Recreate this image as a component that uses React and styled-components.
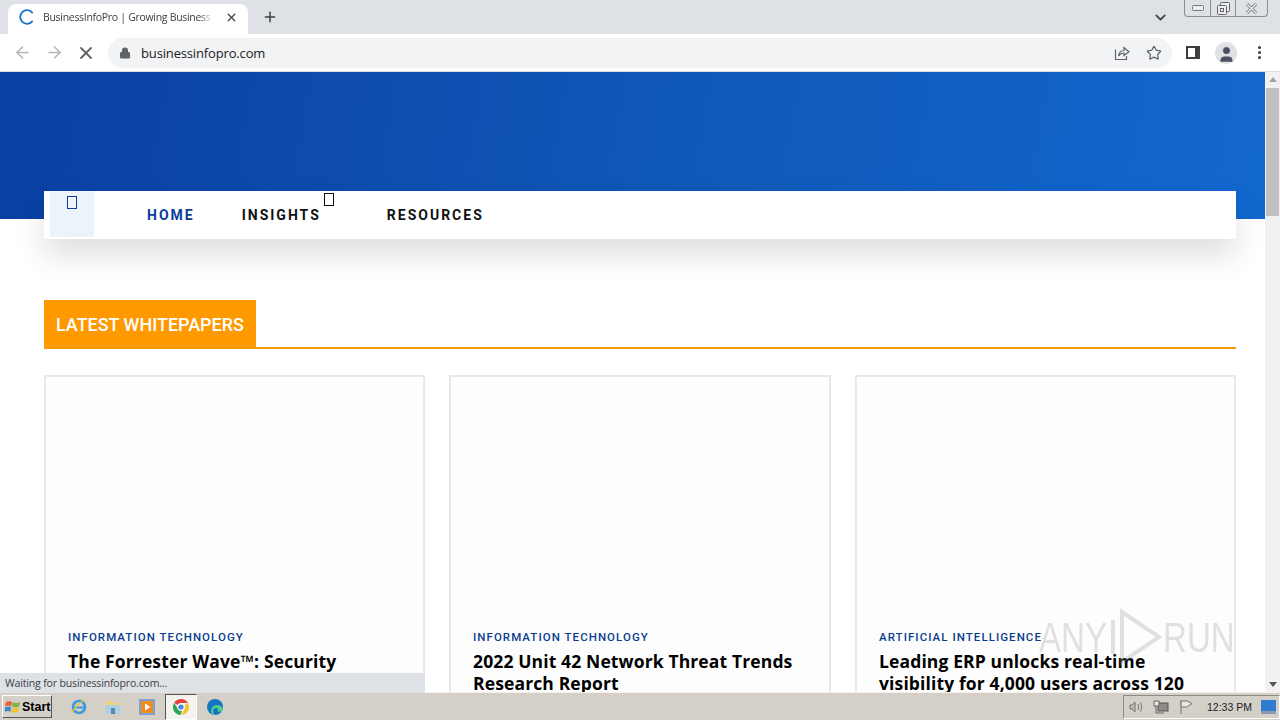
import styled, { createGlobalStyle } from "styled-components";
import { ArrowLeft, ArrowRight, X, Plus, Lock, Star, ChevronDown, MoreVertical, User } from "lucide-react";

const Global = createGlobalStyle`
  html, body { margin: 0; padding: 0; height: 100%; overflow: hidden; }
  * { box-sizing: border-box; }
  body { font-family: "Open Sans", "Liberation Sans", sans-serif; background: #fff; }
`;

const Screen = styled.div`
  position: relative;
  width: 1280px;
  height: 720px;
  display: flex;
  flex-direction: column;
  overflow: hidden;
`;

const TabStrip = styled.div`
  height: 34px;
  flex: none;
  background: #dee1e6;
  display: flex;
  align-items: flex-end;
  padding-left: 8px;
`;

const Tab = styled.div`
  width: 240px;
  height: 30px;
  background: #fff;
  border-radius: 8px 8px 0 0;
  display: flex;
  align-items: center;
  padding: 0 0 4px 11px;
  color: #3c4043;
  font-size: 10.5px;
`;

const TabTitle = styled.span`
  width: 170px;
  margin-left: 8px;
  white-space: nowrap;
  overflow: hidden;
  letter-spacing: -0.3px;
  -webkit-mask-image: linear-gradient(to right, #000 92%, transparent);
  mask-image: linear-gradient(to right, #000 92%, transparent);
`;

const TabClose = styled.span`
  display: flex;
  margin-left: 12px;
  color: #3c4043;
`;

const NewTab = styled.span`
  display: flex;
  margin: 0 0 9px 14px;
  color: #3c4043;
`;

const StripRight = styled.div`
  margin-left: auto;
  align-self: stretch;
  display: flex;
  align-items: flex-start;
`;

const TabsMenu = styled.span`
  display: flex;
  margin: 9px 15px 0 0;
  color: #3c4043;
`;

const WindowButtons = styled.div`
  width: 84px;
  height: 17px;
  margin-right: 12px;
  border: 1px solid #8a8c90;
  border-top: none;
  border-radius: 0 0 4px 4px;
  display: grid;
  grid-template-columns: 25px 25px 1fr;
`;

const WindowButton = styled.span`
  display: flex;
  align-items: center;
  justify-content: center;
  border-left: ${(p) => (p.$first ? "none" : "1px solid #8a8c90")};
`;

const Toolbar = styled.div`
  height: 38px;
  flex: none;
  background: #fff;
  border-bottom: 1px solid #dadce0;
  display: flex;
  align-items: center;
  padding-left: 12px;
`;

const NavIcon = styled.span`
  width: 20px;
  display: flex;
  justify-content: center;
  margin-left: ${(p) => p.$left || 0}px;
  margin-right: ${(p) => p.$gap || 0}px;
  color: ${(p) => p.$color || "#5f6368"};
`;

const Omnibox = styled.div`
  width: 1064px;
  height: 30px;
  margin-left: 12px;
  border-radius: 15px;
  background: #f1f3f4;
  display: flex;
  align-items: center;
  padding-left: 11px;
  color: #202124;
  font-size: 13px;
  letter-spacing: -0.15px;
`;

const Url = styled.span`
  margin-left: 10px;
`;

const OmniIcons = styled.div`
  margin-left: auto;
  margin-right: 10px;
  display: flex;
  gap: 16px;
  color: #5f6368;
`;

const ToolRight = styled.div`
  display: flex;
  align-items: center;
  margin-left: 14px;
  color: #5f6368;
`;

const Avatar = styled.span`
  width: 22px;
  height: 22px;
  margin-left: 15px;
  border-radius: 50%;
  background: #dfe1e5;
  display: flex;
  align-items: flex-end;
  justify-content: center;
  overflow: hidden;
  color: #4a4f63;
`;

const Body = styled.div`
  flex: 1;
  min-height: 0;
  display: flex;
`;

const Page = styled.div`
  flex: 1;
  min-width: 0;
  overflow: hidden;
  background: #fff;
`;

const Hero = styled.div`
  height: 147px;
  background: linear-gradient(100deg, #0a3fa3 0%, #1059b8 55%, #1267cf 100%);
`;

const MainNav = styled.nav`
  height: 48px;
  margin: -28px 29px 0 44px;
  position: relative;
  background: #fff;
  display: flex;
  box-shadow: 0 16px 30px rgba(0, 0, 0, 0.13);
  font-family: Roboto, "Liberation Sans", sans-serif;
`;

const MenuToggle = styled.div`
  width: 44px;
  height: 46px;
  margin-left: 6px;
  background: #edf3fb;
  display: flex;
  justify-content: center;
  padding-top: 5px;
`;

const MissingGlyph = styled.span`
  width: ${(p) => p.$w}px;
  height: ${(p) => p.$h}px;
  border: 1px solid ${(p) => p.$color};
`;

const NavItem = styled.a`
  position: relative;
  margin-left: ${(p) => p.$left}px;
  line-height: 48px;
  font-size: 14px;
  font-weight: 700;
  letter-spacing: 2px;
  color: ${(p) => (p.$active ? "#0a3d9a" : "#111")};
`;

const CaretBox = styled.span`
  position: absolute;
  top: 2px;
  left: 82px;
  display: flex;
`;

const Section = styled.section`
  margin: 61px 29px 0 44px;
`;

const SectionHead = styled.div`
  height: 49px;
  border-bottom: 2px solid #f59c0b;
`;

const SectionTitle = styled.h2`
  width: 212px;
  height: 48px;
  margin: 0;
  padding-left: 12px;
  background: #ff9900;
  color: #fff;
  font: 500 18px/50px Roboto, "Liberation Sans", sans-serif;
  letter-spacing: -0.03px;
  white-space: nowrap;
`;

const Cards = styled.div`
  margin-top: 26px;
  display: grid;
  grid-template-columns: 381px 382px 381px;
  column-gap: 24px;
`;

const Card = styled.article`
  height: 340px;
  background: #fdfdfd;
  border: 2px solid #e8e8e8;
  padding: 253px 22px 0;
`;

const Category = styled.div`
  color: #0a3d8f;
  font: 500 11.5px/14px Roboto, "Liberation Sans", sans-serif;
  letter-spacing: 1.05px;
  text-transform: uppercase;
`;

const CardTitle = styled.h3`
  margin: 6px 0 0;
  color: #000;
  font: 700 17.5px/22px "Open Sans", "Liberation Sans", sans-serif;
  letter-spacing: 0.13px;
`;

const Scrollbar = styled.div`
  width: 15px;
  flex: none;
  background: #f1f1f1;
  display: flex;
  flex-direction: column;
  align-items: center;
  padding: 5px 0;
`;

const Thumb = styled.div`
  width: 13px;
  height: 128px;
  margin-top: 6px;
  background: #c1c1c1;
`;

const ArrowDown = styled.div`
  margin-top: auto;
  width: 0;
  height: 0;
  border: 4px solid transparent;
  border-top: 5px solid #555;
  border-bottom: none;
`;

const ArrowUp = styled(ArrowDown)`
  margin-top: 0;
  border-top: none;
  border-bottom: 5px solid #a3a3a3;
`;

const Taskbar = styled.div`
  height: 28px;
  flex: none;
  background: #d4d0c8;
  border-top: 1px solid #f3f1ec;
  display: flex;
  align-items: center;
  padding-left: 2px;
`;

const StartButton = styled.div`
  width: 50px;
  height: 23px;
  background: #d4d0c8;
  border: 1px solid;
  border-color: #fff #555 #555 #fff;
  display: flex;
  align-items: center;
  gap: 1px;
  padding-left: 2px;
  font: 700 12.5px "Liberation Sans", sans-serif;
  color: #000;
`;

const QuickLaunch = styled.div`
  margin-left: 11px;
  display: flex;
  align-items: center;
`;

const LaunchItem = styled.span`
  width: 32px;
  height: 26px;
  margin-right: 2px;
  display: flex;
  align-items: center;
  justify-content: center;
  ${(p) => p.$active && "background: #f4f3f0; border: 1px solid; border-color: #555 #fff #fff #555;"}
`;

const Tray = styled.div`
  margin-left: auto;
  width: 157px;
  height: 24px;
  border: 1px solid;
  border-color: #8d8a84 #fff #fff #8d8a84;
  display: flex;
  align-items: center;
  gap: 9px;
  padding-left: 4px;
  font: 10.5px "Liberation Sans", sans-serif;
  color: #222;
`;

const Clock = styled.span`
  margin-left: 4px;
  white-space: nowrap;
`;

const StatusBubble = styled.div`
  position: absolute;
  left: 0;
  bottom: 27px;
  width: 425px;
  height: 20px;
  padding-left: 5px;
  background: #dee1e6;
  border-top-right-radius: 2px;
  color: #3c4043;
  font-size: 10.5px;
  line-height: 20px;
  letter-spacing: -0.15px;
`;

const Watermark = styled.div`
  position: absolute;
  left: 1039px;
  top: 608px;
  display: flex;
  align-items: center;
  color: rgba(150, 150, 150, 0.28);
  font: 400 43px/54px "Liberation Sans", sans-serif;
  pointer-events: none;
`;

const Narrow = styled.span`
  display: inline-block;
  width: ${(p) => p.$w}px;
  transform: scaleX(0.77);
  transform-origin: left;
  white-space: nowrap;
`;

function Spinner() {
  return (
    <svg width="16" height="16" viewBox="0 0 16 16" fill="none">
      <path d="M13.2 3.6A6.8 6.8 0 1 0 13.2 12.4" stroke="#1a6fc9" strokeWidth="1.8" strokeLinecap="round" />
    </svg>
  );
}

function ShareIcon() {
  return (
    <svg width="16" height="16" viewBox="0 0 16 16" fill="none" stroke="#5f6368" strokeWidth="1.2">
      <path d="M1.5 4.5V14.5H12.5V11" />
      <path d="M4.5 11C5 7.5 7.5 5.5 10 5.5V2.5L15 6.8 10 10.5V8C8 8 6 9 4.5 11Z" />
    </svg>
  );
}

function SidePanelIcon() {
  return (
    <svg width="14" height="14" viewBox="0 0 14 14">
      <rect x="0" y="0" width="14" height="13" fill="#3c4043" />
      <rect x="2" y="2" width="7" height="9" fill="#fff" />
    </svg>
  );
}

function WinLogo() {
  return (
    <svg width="16" height="15" viewBox="0 0 18 16">
      <path d="M1 3Q4 1 8 3L7 8Q4 6 0 8Z" fill="#e8622c" />
      <path d="M9 3Q12 5 17 3L16 8Q12 10 8 8Z" fill="#7cb342" />
      <path d="M0 9Q4 7 7 9L6 14Q3 12 0 14Z" fill="#3d87d6" />
      <path d="M8 9Q12 11 16 9L15 14Q11 16 7 14Z" fill="#f5c02c" />
    </svg>
  );
}

function IeIcon() {
  return (
    <svg width="18" height="18" viewBox="0 0 18 18" fill="none">
      <circle cx="9" cy="9" r="6" stroke="#3a9bdc" strokeWidth="2.6" />
      <path d="M3 9.5H15" stroke="#3a9bdc" strokeWidth="2" />
      <path d="M2 15C4 10 10 3 16 2" stroke="#f2c230" strokeWidth="1.2" />
    </svg>
  );
}

function FolderIcon() {
  return (
    <svg width="18" height="18" viewBox="0 0 18 18">
      <path d="M2 3H8L9 5H16V15H2Z" fill="#f0d278" />
      <rect x="2" y="7" width="14" height="9" fill="#a9d0e6" />
      <rect x="7" y="10" width="4" height="6" fill="#5a88a8" />
    </svg>
  );
}

function PlayerIcon() {
  return (
    <svg width="18" height="18" viewBox="0 0 18 18">
      <rect x="1" y="1" width="16" height="16" fill="#7aa4cf" />
      <rect x="3" y="3" width="12" height="12" fill="#f08c1e" />
      <path d="M7 5.5L12.5 9 7 12.5Z" fill="#fff" />
    </svg>
  );
}

function ChromeIcon() {
  return (
    <svg width="18" height="18" viewBox="0 0 18 18">
      <path d="M9 1A8 8 0 0 1 16 5H9A4 4 0 0 0 5.5 7L2.2 4.7A8 8 0 0 1 9 1Z" fill="#e0443a" />
      <path d="M16 5A8 8 0 0 1 9.5 17L12.5 11A4 4 0 0 0 12.5 7Z" fill="#f7c52b" />
      <path d="M2.2 4.7L5.5 10.5A4 4 0 0 0 10 13L8.5 17A8 8 0 0 1 2.2 4.7Z" fill="#2fa44f" />
      <circle cx="9" cy="9" r="3.4" fill="#fff" />
      <circle cx="9" cy="9" r="2.6" fill="#4a86e8" />
    </svg>
  );
}

function EdgeIcon() {
  return (
    <svg width="18" height="18" viewBox="0 0 18 18">
      <circle cx="9" cy="9" r="8" fill="#1573c4" />
      <path d="M7 17C3 13 6 7 11 7C15 7 17 10 17 11C16 14 13 14 11 13C13 12 12 10 10 10C7 10 6 14 9 17Z" fill="#4fd08a" />
    </svg>
  );
}

function SpeakerIcon() {
  return (
    <svg width="16" height="16" viewBox="0 0 16 16" fill="none" stroke="#77776f">
      <path d="M2 6H4L7 3V13L4 10H2Z" fill="#bdbab2" />
      <path d="M10 5Q11.5 8 10 11M12.5 3.5Q15 8 12.5 12.5" />
    </svg>
  );
}

function NetworkIcon() {
  return (
    <svg width="16" height="16" viewBox="0 0 16 16" fill="none">
      <rect x="5" y="4" width="10" height="8" fill="#8d8c86" stroke="#555" />
      <path d="M1 2H6V7H1Z" fill="#e8e6df" stroke="#66645e" />
      <path d="M3 7V14H11" stroke="#66645e" />
    </svg>
  );
}

function FlagIcon() {
  return (
    <svg width="16" height="16" viewBox="0 0 16 16" fill="none" stroke="#77776f">
      <path d="M3 1V15" />
      <path d="M3 2H9L14 4.5 9 8H3Z" fill="#e9e6dd" />
    </svg>
  );
}

function DesktopIcon() {
  return (
    <svg width="15" height="14" viewBox="0 0 15 14">
      <rect width="15" height="11" fill="#2f7bd0" />
      <rect y="11" width="15" height="3" fill="#8a9bb0" />
    </svg>
  );
}

const cards = [
  { category: "Information Technology", title: "The Forrester Wave™: Security" },
  { category: "Information Technology", title: "2022 Unit 42 Network Threat Trends Research Report" },
  { category: "Artificial Intelligence", title: "Leading ERP unlocks real-time visibility for 4,000 users across 120" },
];

export default function App() {
  return (
    <Screen>
      <Global />
      <TabStrip>
        <Tab>
          <Spinner />
          <TabTitle>BusinessInfoPro | Growing Business</TabTitle>
          <TabClose>
            <X size={13} strokeWidth={2.4} />
          </TabClose>
        </Tab>
        <NewTab>
          <Plus size={16} strokeWidth={2.2} />
        </NewTab>
        <StripRight>
          <TabsMenu>
            <ChevronDown size={17} strokeWidth={2.4} />
          </TabsMenu>
          <WindowButtons>
            <WindowButton $first>
              <svg width="12" height="6" viewBox="0 0 12 6" fill="#eceef1" stroke="#777">
                <rect x="0.5" y="0.5" width="11" height="5" rx="1" />
              </svg>
            </WindowButton>
            <WindowButton>
              <svg width="13" height="13" viewBox="0 0 13 13" fill="#eceef1" stroke="#666">
                <rect x="3.5" y="0.5" width="9" height="9" rx="1" />
                <rect x="0.5" y="3.5" width="9" height="9" rx="1" />
                <rect x="3.5" y="6.5" width="3" height="3" />
              </svg>
            </WindowButton>
            <WindowButton>
              <svg width="13" height="11" viewBox="0 0 13 11" fill="none">
                <path d="M2 1L11 10M11 1L2 10" stroke="#777" strokeWidth="3" />
                <path d="M2 1L11 10M11 1L2 10" stroke="#f1f2f4" strokeWidth="1.2" />
              </svg>
            </WindowButton>
          </WindowButtons>
        </StripRight>
      </TabStrip>
      <Toolbar>
        <NavIcon $color="#b4b6b9" $gap={12}>
          <ArrowLeft size={19} strokeWidth={2} />
        </NavIcon>
        <NavIcon $color="#b4b6b9" $gap={12}>
          <ArrowRight size={19} strokeWidth={2} />
        </NavIcon>
        <NavIcon>
          <X size={20} strokeWidth={2.2} />
        </NavIcon>
        <Omnibox>
          <Lock size={12} fill="#5f6368" color="#5f6368" strokeWidth={2.2} />
          <Url>businessinfopro.com</Url>
          <OmniIcons>
            <ShareIcon />
            <Star size={16} strokeWidth={1.8} />
          </OmniIcons>
        </Omnibox>
        <ToolRight>
          <SidePanelIcon />
          <Avatar>
            <User size={19} fill="#4a4f63" strokeWidth={1} />
          </Avatar>
          <NavIcon $left={12} $color="#3c4043">
            <MoreVertical size={17} strokeWidth={2.4} />
          </NavIcon>
        </ToolRight>
      </Toolbar>
      <Body>
        <Page>
          <Hero />
          <MainNav>
            <MenuToggle>
              <MissingGlyph $w={10} $h={13} $color="#0a3d9a" />
            </MenuToggle>
            <NavItem $left={53} $active>
              HOME
            </NavItem>
            <NavItem $left={47}>
              INSIGHTS
              <CaretBox>
                <MissingGlyph $w={10} $h={13} $color="#111" />
              </CaretBox>
            </NavItem>
            <NavItem $left={66}>RESOURCES</NavItem>
          </MainNav>
          <Section>
            <SectionHead>
              <SectionTitle>LATEST WHITEPAPERS</SectionTitle>
            </SectionHead>
            <Cards>
              {cards.map((card) => (
                <Card key={card.title}>
                  <Category>{card.category}</Category>
                  <CardTitle>{card.title}</CardTitle>
                </Card>
              ))}
            </Cards>
          </Section>
        </Page>
        <Scrollbar>
          <ArrowUp />
          <Thumb />
          <ArrowDown />
        </Scrollbar>
      </Body>
      <Taskbar>
        <StartButton>
          <WinLogo />
          Start
        </StartButton>
        <QuickLaunch>
          <LaunchItem>
            <IeIcon />
          </LaunchItem>
          <LaunchItem>
            <FolderIcon />
          </LaunchItem>
          <LaunchItem>
            <PlayerIcon />
          </LaunchItem>
          <LaunchItem $active>
            <ChromeIcon />
          </LaunchItem>
          <LaunchItem>
            <EdgeIcon />
          </LaunchItem>
        </QuickLaunch>
        <Tray>
          <SpeakerIcon />
          <NetworkIcon />
          <FlagIcon />
          <Clock>12:33 PM</Clock>
          <DesktopIcon />
        </Tray>
      </Taskbar>
      <StatusBubble>Waiting for businessinfopro.com...</StatusBubble>
      <Watermark>
        <Narrow $w={70}>ANY</Narrow>
        <svg width="54" height="58" viewBox="0 0 54 58" fill="none" stroke="rgba(150,150,150,0.28)" strokeWidth="4">
          <path d="M4 12V46M13 4L50 29 13 54Z" />
        </svg>
        <Narrow $w={66}>RUN</Narrow>
      </Watermark>
    </Screen>
  );
}
